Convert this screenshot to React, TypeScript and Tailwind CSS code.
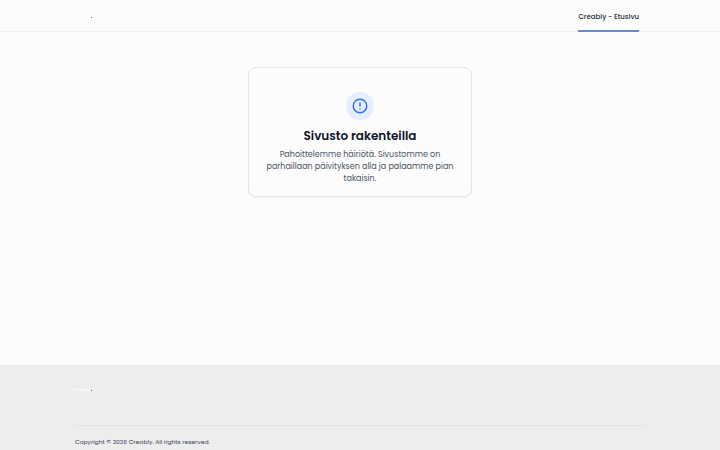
import React from "react";

function Logo() {
  return (
    <a href="#" aria-label="Creably" className="flex items-baseline pt-0.5 text-[4px] leading-none font-medium text-white">
      Creably
      <span className="size-px bg-[#5b6069]" />
    </a>
  );
}

function AlertIcon() {
  return (
    <svg viewBox="0 0 24 24" fill="none" stroke="currentColor" strokeWidth="2" strokeLinecap="round" className="size-[18px]" aria-hidden="true">
      <circle cx="12" cy="12" r="9" />
      <path d="M12 8v4M12 16h.01" />
    </svg>
  );
}

export default function App() {
  return (
    <div className="flex min-h-screen flex-col bg-[#fcfcfc] font-[Poppins,Inter,sans-serif]">
      <header className="border-b border-[#f1f1f2]">
        <div className="mx-auto flex h-[31px] w-full max-w-[570px] items-center justify-between pr-1.5">
          <Logo />
          <nav className="-mb-px flex h-8">
            <a href="#" className="flex items-center border-b-2 border-[#5c8fd6] pt-1 text-[7px] font-medium text-[#1f2937]">
              Creably - Etusivu
            </a>
          </nav>
        </div>
      </header>

      <main className="flex flex-1 flex-col items-center px-4 pt-[35px]">
        <section className="flex w-full max-w-56 flex-col items-center rounded-lg border border-[#e4e5e8] bg-[#fcfcfc] px-4 pt-6 pb-[11px] text-center shadow-xs">
          <div className="flex size-7 items-center justify-center rounded-full bg-[#e4eefc] text-[#3974dc]">
            <AlertIcon />
          </div>
          <h1 className="mt-2 text-[12px] leading-4 font-semibold text-[#0f172a]">Sivusto rakenteilla</h1>
          <p className="mt-[5px] text-[8px] leading-3 text-[#4b5563]">
            Pahoittelemme häiriötä. Sivustomme on parhaillaan päivityksen alla ja palaamme pian takaisin.
          </p>
        </section>
      </main>

      <footer className="bg-[#ededed]">
        <div className="mx-auto w-full max-w-[570px]">
          <div className="h-[60px] pt-[21px]">
            <Logo />
          </div>
          <p className="border-t border-[#e3e4e6] pt-2.5 pb-[2px] text-[6px] leading-3 text-[#374151]">
            Copyright © 2026 Creably. All rights reserved.
          </p>
        </div>
      </footer>
    </div>
  );
}
